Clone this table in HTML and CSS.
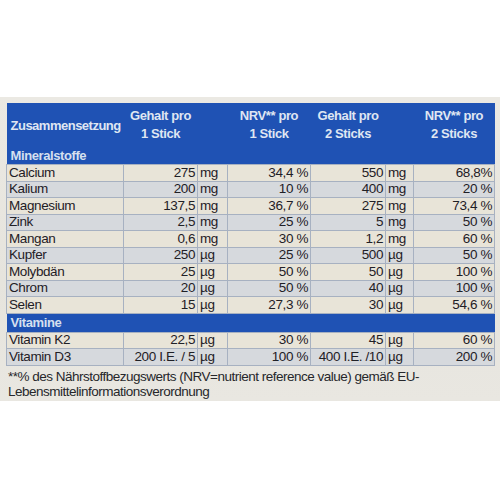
FILE: index.html
```html
<!DOCTYPE html>
<html lang="de">
<head>
    <meta charset="UTF-8">
    <meta name="viewport" content="width=device-width, initial-scale=1.0">
    <title>Zusammensetzung</title>
    <link rel="stylesheet" href="styles.css">
</head>
<body>
    <div class="card">
        <table class="nrv">
            <colgroup>
                <col class="c-name">
                <col class="c-val">
                <col class="c-unit">
                <col class="c-pct">
                <col class="c-val2">
                <col class="c-unit2">
                <col class="c-pct2">
            </colgroup>
            <thead>
                <tr class="head">
                    <th class="name">Zusammensetzung</th>
                    <th>Gehalt pro<br>1 Stick</th>
                    <th></th>
                    <th>NRV** pro<br>1 Stick</th>
                    <th>Gehalt pro<br>2 Sticks</th>
                    <th></th>
                    <th>NRV** pro<br>2 Sticks</th>
                </tr>
                <tr class="group"><th colspan="7">Mineralstoffe</th></tr>
            </thead>
            <tbody>
                <tr><td>Calcium</td><td class="num">275</td><td>mg</td><td class="num">34,4 %</td><td class="num">550</td><td>mg</td><td class="num">68,8%</td></tr>
                <tr><td>Kalium</td><td class="num">200</td><td>mg</td><td class="num">10 %</td><td class="num">400</td><td>mg</td><td class="num">20 %</td></tr>
                <tr><td>Magnesium</td><td class="num">137,5</td><td>mg</td><td class="num">36,7 %</td><td class="num">275</td><td>mg</td><td class="num">73,4 %</td></tr>
                <tr><td>Zink</td><td class="num">2,5</td><td>mg</td><td class="num">25 %</td><td class="num">5</td><td>mg</td><td class="num">50 %</td></tr>
                <tr><td>Mangan</td><td class="num">0,6</td><td>mg</td><td class="num">30 %</td><td class="num">1,2</td><td>mg</td><td class="num">60 %</td></tr>
                <tr><td>Kupfer</td><td class="num">250</td><td>µg</td><td class="num">25 %</td><td class="num">500</td><td>µg</td><td class="num">50 %</td></tr>
                <tr><td>Molybdän</td><td class="num">25</td><td>µg</td><td class="num">50 %</td><td class="num">50</td><td>µg</td><td class="num">100 %</td></tr>
                <tr><td>Chrom</td><td class="num">20</td><td>µg</td><td class="num">50 %</td><td class="num">40</td><td>µg</td><td class="num">100 %</td></tr>
                <tr><td>Selen</td><td class="num">15</td><td>µg</td><td class="num">27,3 %</td><td class="num">30</td><td>µg</td><td class="num">54,6 %</td></tr>
                <tr class="group"><th colspan="7">Vitamine</th></tr>
                <tr><td>Vitamin K2</td><td class="num">22,5</td><td>µg</td><td class="num">30 %</td><td class="num">45</td><td>µg</td><td class="num">60 %</td></tr>
                <tr class="alt"><td>Vitamin D3</td><td class="num">200 I.E. / 5</td><td>µg</td><td class="num">100 %</td><td class="num">400 I.E. /10</td><td>µg</td><td class="num">200 %</td></tr>
            </tbody>
        </table>
        <p class="note">**% des Nährstoffbezugswerts (NRV=nutrient reference value) gemäß EU-<br>Lebensmittelinformationsverordnung</p>
    </div>
</body>
</html>
```

FILE: styles.css
```css
body{
    margin: 0;
    background: #ffffff;
    font-family: "Liberation Sans", Arial, sans-serif;
    color: #1f2026;
}
.card{
    margin-top: 97px;
    height: 304px;
    box-sizing: border-box;
    padding: 6px 6px 0 6px;
    background: linear-gradient(180deg, #ebe9e3 0%, #e6e4dd 60%, #e9e7e1 100%);
}
.nrv{
    width: 488px;
    border-collapse: collapse;
    table-layout: fixed;
    font-size: 13.5px;
    letter-spacing: -0.4px;
}
.c-name{ width: 117px; }
.c-val{ width: 74px; }
.c-unit{ width: 30px; }
.c-pct{ width: 83px; }
.c-val2{ width: 75px; }
.c-unit2{ width: 28px; }
.c-pct2{ width: 81px; }

.head th{
    height: 42px;
    padding: 0;
    background: #1f52b4;
    color: #dfe6f2;
    font-weight: bold;
    font-size: 13px;
    line-height: 18px;
    text-align: center;
    vertical-align: middle;
    letter-spacing: -0.4px;
}
.head th.name{
    text-align: left;
    padding-left: 4px;
    padding-top: 2px;
    letter-spacing: -0.5px;
}
.group th{
    height: 17px;
    padding: 0 0 0 4px;
    background: #1f52b4;
    color: #d6e0ef;
    font-weight: bold;
    font-size: 13px;
    text-align: left;
    line-height: 15px;
    letter-spacing: -0.4px;
}
tbody .group th{
    height: 18px;
}
tbody td{
    height: 15.5px;
    padding: 0 2px;
    line-height: 14px;
    border: 1px solid #a7b1c1;
    white-space: nowrap;
    background: #e8e4d8;
}
tbody tr:nth-child(even) td{
    background: #d6d9dd;
}
tbody tr.alt td{
    background: #d6d9dd;
}
td.num{
    text-align: right;
    padding-right: 2px;
}
.note{
    margin: 3px 0 0 2px;
    font-size: 13.5px;
    line-height: 15px;
    letter-spacing: -0.5px;
    color: #26272b;
}
```
